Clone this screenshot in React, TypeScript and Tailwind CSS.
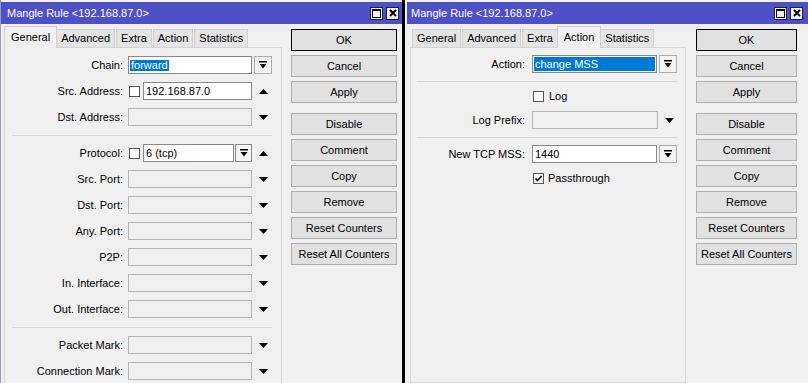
import React from 'react'

const tabNames = ['General', 'Advanced', 'Extra', 'Action', 'Statistics']
const topButtons = ['OK', 'Cancel', 'Apply']
const lowerButtons = ['Disable', 'Comment', 'Copy', 'Remove', 'Reset Counters', 'Reset All Counters']

function TitleBtn({ kind }: { kind: 'max' | 'close' }) {
  return (
    <div className="w-[13px] h-[13px] border border-[#222] bg-[#f0f0f0] flex items-center justify-center">
      {kind === 'max' ? (
        <svg width="9" height="9" viewBox="0 0 9 9">
          <rect x="0.5" y="0.5" width="8" height="8" fill="none" stroke="#000" />
          <rect x="0" y="0" width="9" height="2" fill="#000" />
        </svg>
      ) : (
        <svg width="8" height="8" viewBox="0 0 8 8">
          <path d="M1 1L7 7M7 1L1 7" stroke="#000" strokeWidth="2" />
        </svg>
      )}
    </div>
  )
}

function TitleBar({ pad }: { pad: string }) {
  return (
    <div className={`h-[22px] shrink-0 bg-[#4f4fc6] flex items-center ${pad}`}>
      <span className="text-white text-[11px]">Mangle Rule &lt;192.168.87.0&gt;</span>
      <div className="ml-auto flex gap-[3px]">
        <TitleBtn kind="max" />
        <TitleBtn kind="close" />
      </div>
    </div>
  )
}

function Tabs({ active }: { active: string }) {
  return (
    <div className="h-[23px] shrink-0 flex items-end gap-[1px] pl-[2px]">
      {tabNames.map((t) =>
        t === active ? (
          <div
            key={t}
            className="relative z-10 -mx-[2px] -mb-px h-[22px] px-[6px] bg-[#f0f0f0] border border-b-0 border-[#cfcfcf] flex items-center"
          >
            {t}
          </div>
        ) : (
          <div
            key={t}
            className="h-[18px] px-[4px] bg-[#e4e4e4] border border-b-0 border-[#cfcfcf] flex items-center"
          >
            {t}
          </div>
        ),
      )}
    </div>
  )
}

function Tri({ up }: { up?: boolean }) {
  return (
    <div className="w-[18px] ml-[2px] flex justify-center">
      <svg width="9" height="5" viewBox="0 0 9 5">
        <path d={up ? 'M0 5L4.5 0L9 5Z' : 'M0 0L9 0L4.5 5Z'} fill="#000" />
      </svg>
    </div>
  )
}

function DropIcon() {
  return (
    <svg width="8" height="8" viewBox="0 0 8 8">
      <rect x="0" y="0" width="8" height="1.5" fill="#000" />
      <path d="M0.5 3L7.5 3L4 7.5Z" fill="#000" />
    </svg>
  )
}

function DropBtn() {
  return (
    <div className="w-[18px] h-[18px] ml-[2px] border border-[#adadad] bg-[#f4f4f4] flex items-center justify-center">
      <DropIcon />
    </div>
  )
}

function Check({ checked }: { checked?: boolean }) {
  return (
    <div className="w-[11px] h-[11px] ml-[1px] border border-[#555] bg-white flex items-center justify-center">
      {checked && (
        <svg width="9" height="9" viewBox="0 0 9 9">
          <path d="M1.5 4.5L3.5 6.5L7.5 2" fill="none" stroke="#000" strokeWidth="1.6" />
        </svg>
      )}
    </div>
  )
}

function Box({ w, white, children }: { w: string; white?: boolean; children?: React.ReactNode }) {
  return (
    <div
      className={`${w} h-[18px] border flex items-center ${
        white ? 'bg-white border-[#8a8a8a]' : 'bg-[#f0f0f0] border-[#b4b4b4]'
      }`}
    >
      {children}
    </div>
  )
}

function Row({ label, lw, h, children }: { label?: string; lw: string; h: string; children: React.ReactNode }) {
  return (
    <div className={`flex items-center ${h}`}>
      <div className={`${lw} text-right shrink-0`}>{label ? label + ':' : ''}</div>
      {children}
    </div>
  )
}

function Sep({ h, line }: { h: string; line: string }) {
  return (
    <div className={h}>
      <div className={`h-px bg-[#d6d6d6] ${line}`} />
    </div>
  )
}

function Buttons({ w }: { w: string }) {
  const btn = (b: string) => (
    <div
      key={b}
      className={`h-[22px] border flex items-center justify-center bg-[#e1e1e1] ${
        b === 'OK' ? 'border-black' : 'border-[#adadad]'
      }`}
    >
      {b}
    </div>
  )
  return (
    <div className={`${w} shrink-0 flex flex-col`}>
      <div className="flex flex-col gap-[4px]">{topButtons.map(btn)}</div>
      <div className="mt-[10px] flex flex-col gap-[4px]">{lowerButtons.map(btn)}</div>
    </div>
  )
}

function LeftWindow() {
  const lw = 'w-[118px] mr-[5px]'
  const empty = (label: string) => (
    <Row key={label} label={label} lw={lw} h="h-[26px]">
      <Box w="w-[124px]" />
      <Tri />
    </Row>
  )
  return (
    <div className="w-[402px] shrink-0 flex flex-col bg-[#f0f0f0] border-l border-[#9c9cb8] overflow-hidden">
      <div className="h-[2px] shrink-0" />
      <TitleBar pad="pl-[6px] pr-[3px]" />
      <div className="flex flex-1 min-h-0">
        <div className="ml-[3px] w-[278px] flex flex-col">
          <Tabs active="General" />
          <div className="flex-1 border border-[#d4d4d4] pt-[4px]">
            <Row label="Chain" lw={lw} h="h-[26px]">
              <Box w="w-[124px]" white>
                <span className="ml-[1px] px-px bg-[#0078d7] text-white">forward</span>
              </Box>
              <DropBtn />
            </Row>
            <Row label="Src. Address" lw={lw} h="h-[26px]">
              <Check />
              <div className="ml-[3px]">
                <Box w="w-[109px]" white>
                  <span className="pl-[2px]">192.168.87.0</span>
                </Box>
              </div>
              <Tri up />
            </Row>
            {empty('Dst. Address')}
            <Sep h="h-[10px] pt-[5px]" line="ml-[7px] w-[260px]" />
            <Row label="Protocol" lw={lw} h="h-[26px]">
              <Check />
              <div className="ml-[3px]">
                <Box w="w-[91px]" white>
                  <span className="pl-[2px]">6 (tcp)</span>
                </Box>
              </div>
              <div className="w-[17px] h-[18px] ml-px border border-[#8a8a8a] bg-[#f4f4f4] flex items-center justify-center">
                <DropIcon />
              </div>
              <Tri up />
            </Row>
            {['Src. Port', 'Dst. Port', 'Any. Port', 'P2P', 'In. Interface', 'Out. Interface'].map(empty)}
            <Sep h="h-[10px] pt-[5px]" line="ml-[7px] w-[260px]" />
            {['Packet Mark', 'Connection Mark'].map(empty)}
          </div>
        </div>
        <div className="ml-[9px] mt-[5px]">
          <Buttons w="w-[106px]" />
        </div>
      </div>
    </div>
  )
}

function RightWindow() {
  const lw = 'w-[114px] mr-[7px]'
  return (
    <div className="w-[401px] shrink-0 flex flex-col bg-[#f0f0f0] overflow-hidden">
      <div className="h-[2px] shrink-0" />
      <TitleBar pad="pl-[4px] pr-[5px]" />
      <div className="flex flex-1 min-h-0">
        <div className="ml-[3px] w-[276px] flex flex-col">
          <Tabs active="Action" />
          <div className="flex-1 border border-[#d4d4d4] pt-[3px]">
            <Row label="Action" lw={lw} h="h-[26px]">
              <div className="w-[125px] h-[18px] border border-[#8a8a8a] bg-white p-px">
                <div className="h-full bg-[#0078d7] text-white flex items-center pl-px">change MSS</div>
              </div>
              <DropBtn />
            </Row>
            <Sep h="h-[8px] pt-[4px]" line="ml-[6px] w-[261px]" />
            <Row lw={lw} h="h-[22px]">
              <Check />
              <span className="ml-[5px]">Log</span>
            </Row>
            <Row label="Log Prefix" lw={lw} h="h-[26px]">
              <Box w="w-[126px]" />
              <Tri />
            </Row>
            <Sep h="h-[8px] pt-[4px]" line="ml-[6px] w-[261px]" />
            <Row label="New TCP MSS" lw={lw} h="h-[26px]">
              <Box w="w-[125px]" white>
                <span className="pl-[2px]">1440</span>
              </Box>
              <DropBtn />
            </Row>
            <Row lw={lw} h="h-[22px]">
              <Check checked />
              <span className="ml-[4px]">Passthrough</span>
            </Row>
          </div>
        </div>
        <div className="ml-[10px] mt-[5px]">
          <Buttons w="w-[101px]" />
        </div>
      </div>
    </div>
  )
}

export default function App() {
  return (
    <div className="w-[808px] h-[383px] overflow-hidden flex bg-[#f0f0f0] text-[11px] text-black font-['Liberation_Sans',Arial,sans-serif] leading-none">
      <LeftWindow />
      <div className="w-[3px] shrink-0 bg-black" />
      <div className="w-[2px] shrink-0 bg-[#f0f0f0]" />
      <RightWindow />
    </div>
  )
}
